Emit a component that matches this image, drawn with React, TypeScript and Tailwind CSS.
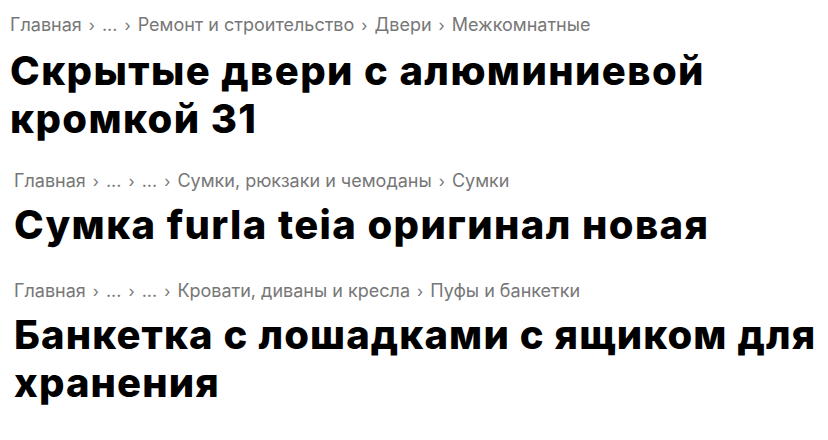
import React from "react";

type Item = { crumbs: string[]; title: string; pad: string; gap: string; track: string };

const items: Item[] = [
  {
    crumbs: ["Главная", "...", "Ремонт и строительство", "Двери", "Межкомнатные"],
    title: "Скрытые двери с алюминиевой кромкой 31",
    pad: "pl-[10px] pt-[13px]",
    gap: "gap-[10px]",
    track: "tracking-[0.035em]",
  },
  {
    crumbs: ["Главная", "...", "...", "Сумки, рюкзаки и чемоданы", "Сумки"],
    title: "Сумка furla teia оригинал новая",
    pad: "pl-[14px] pt-[26px]",
    gap: "gap-[8px]",
    track: "tracking-[0.035em]",
  },
  {
    crumbs: ["Главная", "...", "...", "Кровати, диваны и кресла", "Пуфы и банкетки"],
    title: "Банкетка с лошадками с ящиком для хранения",
    pad: "pl-[14px] pt-[30px]",
    gap: "gap-[8px]",
    track: "tracking-[0.028em]",
  },
];

function Crumbs({ crumbs }: { crumbs: string[] }) {
  return (
    <div className="flex items-center text-[18px] leading-[24px] text-[#777777] whitespace-nowrap">
      {crumbs.map((c, i) => (
        <React.Fragment key={i}>
          {i > 0 && <span className="mx-[7px] text-[16px]">›</span>}
          <span>{c}</span>
        </React.Fragment>
      ))}
    </div>
  );
}

export default function App() {
  return (
    <div
      className="w-[828px] h-[440px] bg-white overflow-hidden flex flex-col"
      style={{ fontFamily: "Inter, 'Noto Sans', sans-serif" }}
    >
      {items.map((it, i) => (
        <div key={i} className={`${it.pad} flex flex-col ${it.gap}`}>
          <Crumbs crumbs={it.crumbs} />
          <h1 className={`text-[40px] leading-[48px] font-extrabold text-black ${it.track}`}>
            {it.title}
          </h1>
        </div>
      ))}
    </div>
  );
}
